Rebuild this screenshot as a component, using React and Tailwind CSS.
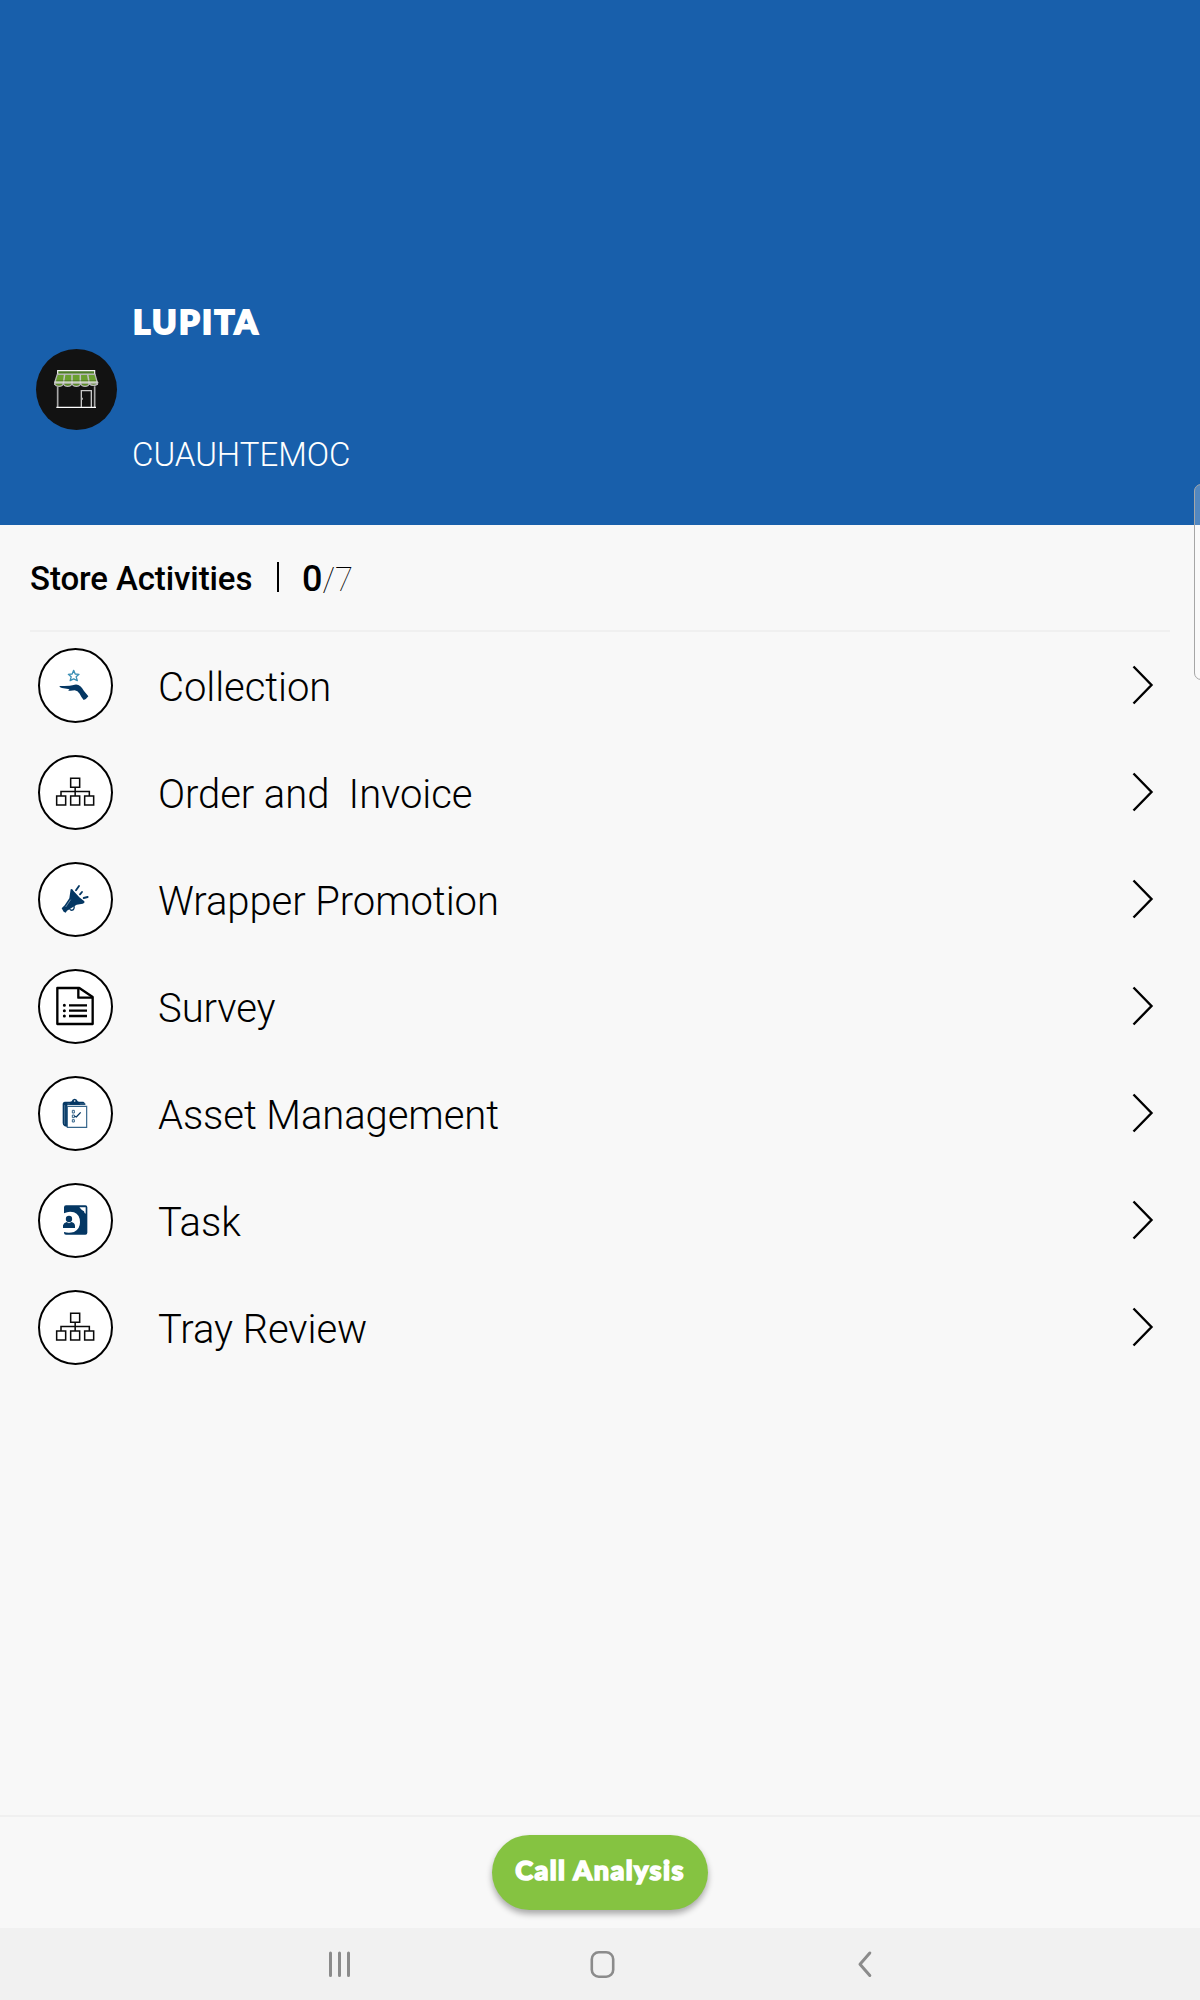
const NAVY = '#043763';

function StoreIcon() {
  return (
    <svg viewBox="18 27 243 243" className="size-full" fill="none">
      <path d="M83 92H194V103H83Z" fill="#4c7c26" stroke="#f4f4f4" strokeWidth="3.5" />
      <path d="M82 103H195L202 128V133H74V128Z" fill="#6a9f30" stroke="#b5b5b5" strokeWidth="4" />
      <path d="M74 129a13 10 0 0 0 26 0a13 10 0 0 0 26 0a13 10 0 0 0 26 0a13 10 0 0 0 26 0a13 10 0 0 0 25 0Z" fill="#5c8c2a" stroke="#b8b8b8" strokeWidth="4" />
      <path d="M104 103L100 132M126 103V132M151 103V132M173 103L178 132" stroke="#c2c2c2" strokeWidth="4.5" />
      <path d="M80 123H198" stroke="#3c5a20" strokeWidth="2" />
      <path d="M74 126H203" stroke="#f0f0f0" strokeWidth="3" />
      <path d="M83 139V201M194 139V201" stroke="#a8a8a8" strokeWidth="5" />
      <path d="M79 202H198" stroke="#fff" strokeWidth="3.5" />
      <path d="M154 201V152H184V201" stroke="#c9c9c9" strokeWidth="4" />
      <path d="M157 173v6" stroke="#aaa" strokeWidth="4" />
    </svg>
  );
}

function CollectionIcon() {
  return (
    <svg viewBox="24 24 225 225" className="size-full" fill="none">
      <path d="M131 91L135.500 102L147 103L138.500 110.500L142 122L131 116.500L120.500 122L123.500 110.500L115 103L126.500 102Z" stroke="#3a8fb5" strokeWidth="4" strokeLinejoin="round" />
      <path d="M88 138Q103 138 119 137Q128 136 134 134Q144 132 151 139Q157 144 162 153L175 169Q170 177 161 180Q154 172 149 161Q143 152 134 151Q125 153 115 152Q116 149 119 148L96 144Q89 143 88 138Z" fill={NAVY} />
    </svg>
  );
}

function TreeIcon() {
  return (
    <svg viewBox="24 346 225 225" className="size-full" fill="none" stroke="#0a0a0a" strokeWidth="4.6">
      <path d="M122 416H149V443H122ZM80 469H107V496H80ZM122 469H149V496H122ZM164 469H191V496H164Z" />
      <path d="M135.500 443V469M93 469V455.500H178V469" />
    </svg>
  );
}

function PromotionIcon() {
  return (
    <svg viewBox="24 21 225 225" className="size-full" fill="none">
      <path d="M122 103Q127 100 130 107L148 127L163 139Q165 145 158 146L140 149L111 167L107 173L101 170L95 160L104 151L118 130Z" fill={NAVY} />
      <path d="M119 162Q123 168 130 164Q134 160 132 153" stroke={NAVY} strokeWidth="4" />
      <path d="M107 156L122 134" stroke="#9cb4c9" strokeWidth="2" />
      <path d="M138 106L147 93M150 118L156 111M161 129L173 126" stroke={NAVY} strokeWidth="5.500" strokeLinecap="round" />
    </svg>
  );
}

function SurveyIcon() {
  return (
    <svg viewBox="24 342 225 225" className="size-full" fill="none" stroke="#000" strokeWidth="7" strokeLinejoin="round">
      <path d="M82 399H148L188 426V507H82Z" />
      <path d="M145 399V428H188" />
      <path d="M117 451H171M117 467H171M117 483H171" />
      <path d="M103 451h.1M103 467h.1M103 483h.1" strokeWidth="9" strokeLinecap="round" />
    </svg>
  );
}

function AssetIcon() {
  return (
    <svg viewBox="24 18 225 225" className="size-full" fill="none">
      <path d="M104 95H120Q122 94 125 94Q127 86 134 86Q141 86 143 94L147 95H160Q166 97 166 105H112V171L104 169Q98 166 98 159V101Q98 96 104 95Z" fill={NAVY} />
      <path d="M112 109H170V172H112Z" fill="#fff" stroke="#35658b" strokeWidth="3.500" />
      <path d="M112 102H168M104 105V163" stroke="#6d8eaa" strokeWidth="2" />
      <path d="M118 104H151L146 97H122Z" fill={NAVY} />
      <circle cx="134" cy="93" r="2.500" fill="#fff" />
      <path d="M127 121H133V129H127ZM127 135H133V143H127ZM127 149H133V156H127Z" stroke="#35658b" strokeWidth="3" />
      <path d="M133 138L139 141L152 127" stroke={NAVY} strokeWidth="4" />
    </svg>
  );
}

function TaskIcon() {
  return (
    <svg viewBox="24 339 225 225" className="size-full">
      <path d="M108 406H166Q172 406 172 412V488Q172 494 166 494H108Q102 494 102 488V486Q116 491 132 486Q150 478 150 457Q150 434 132 427Q117 422 102 430V412Q102 406 108 406Z" fill={NAVY} />
      <path d="M148 412H167V431Q163 431 162 424Q155 421 148 412Z" fill="#fff" />
      <circle cx="117" cy="447" r="9.500" fill={NAVY} />
      <path d="M99 474V466Q101 458 110 456L117 460L124 456Q134 458 135 467V474Z" fill={NAVY} />
    </svg>
  );
}

const activities = [
  { name: 'Collection', Icon: CollectionIcon },
  { name: 'Order and  Invoice', Icon: TreeIcon },
  { name: 'Wrapper Promotion', Icon: PromotionIcon },
  { name: 'Survey', Icon: SurveyIcon },
  { name: 'Asset Management', Icon: AssetIcon },
  { name: 'Task', Icon: TaskIcon },
  { name: 'Tray Review', Icon: TreeIcon },
];

function ActivityRow({ name, Icon }) {
  return (
    <li className="flex h-[107px] items-start pl-[38px] pr-[46px]">
      <div className="relative size-[75px] shrink-0 rounded-full bg-white">
        <Icon />
        <span className="absolute inset-0 rounded-full border-2 border-black" />
      </div>
      <span className="ml-[45px] mt-4 flex-1 whitespace-pre text-[40px] leading-[48px] font-light tracking-[-0.08px]">{name}</span>
      <svg viewBox="0 0 22 40" className="mt-[17px] h-10 w-[22px]" fill="none" stroke="#000" strokeWidth="2.4">
        <path d="M1.500 1.500L19.500 20L1.500 38.500" />
      </svg>
    </li>
  );
}

export default function App() {
  return (
    <div className="relative flex h-[2000px] w-[1200px] flex-col overflow-hidden bg-[#f8f8f8] font-['Roboto',sans-serif] text-black">
      <header className="flex h-[525px] shrink-0 bg-[#185fab] pl-9 text-white">
        <div className="mt-[349px] size-[81px] shrink-0 overflow-hidden rounded-full bg-[#121212]">
          <StoreIcon />
        </div>
        <div className="ml-[15px] flex flex-col pt-[301px]">
          <h1 className="pl-px font-['Lato',sans-serif] text-[33px] leading-10 font-black tracking-[2.4px] [-webkit-text-stroke:2px_white] [stroke-linejoin:round]">LUPITA</h1>
          <p className="mt-[95px] text-[33px] leading-[38px] font-light">CUAUHTEMOC</p>
        </div>
      </header>

      <section className="mx-[30px] flex h-[107px] shrink-0 items-start border-b-2 border-[#f0f0f0]">
        <h2 className="mt-[35px] w-[247px] whitespace-nowrap text-[33px] leading-[38px] font-medium tracking-[-0.1px]">Store Activities</h2>
        <div className="mt-[37px] h-[30px] w-0.5 bg-black" />
        <p className="ml-[23px] mt-[34px] text-[36px] leading-10"><span className="font-medium">0</span><span className="text-[33px] font-thin">/7</span></p>
      </section>

      <ul className="mt-4 flex-1">
        {activities.map((a) => <ActivityRow key={a.name} {...a} />)}
      </ul>

      <footer className="flex h-[113px] shrink-0 justify-center border-t-2 border-[#f0f0f0] pt-[18px]">
        <button className="h-[75px] w-[216px] whitespace-nowrap rounded-full bg-[#85c341] pb-1 font-['Lato',sans-serif] text-[27px] font-black tracking-[1.45px] text-white shadow-[0_4px_6px_rgba(0,0,0,0.32)] [-webkit-text-stroke:1.6px_white]">Call Analysis</button>
      </footer>

      <nav className="flex h-[72px] shrink-0 items-start bg-[#f1f1f1] pl-[329px]">
        <svg viewBox="0 0 22 28" className="mt-[22px] h-7 w-[22px]" stroke="#8b8b8b" strokeWidth="3" strokeLinecap="round">
          <path d="M1.500 8V25.500M1.500 3V8M10.500 3V25.500M19.500 3V25.500" />
        </svg>
        <svg viewBox="0 0 26 30" className="ml-[239px] mt-[22px] h-[30px] w-[26px]" fill="none" stroke="#8b8b8b" strokeWidth="2.600">
          <rect x="1.800" y="2.300" width="21.400" height="24.400" rx="7" />
        </svg>
        <svg viewBox="0 0 16 28" className="ml-[241px] mt-[22px] h-7 w-4" fill="none" stroke="#8b8b8b" strokeWidth="3" strokeLinecap="round" strokeLinejoin="round">
          <path d="M12.800 3L3 14.200L12.800 25.500" />
        </svg>
      </nav>

      <div className="absolute -right-2 top-[484px] h-[196px] w-[14px] rounded-[7px] border border-[#a6a6a6] bg-white/25" />
    </div>
  );
}
